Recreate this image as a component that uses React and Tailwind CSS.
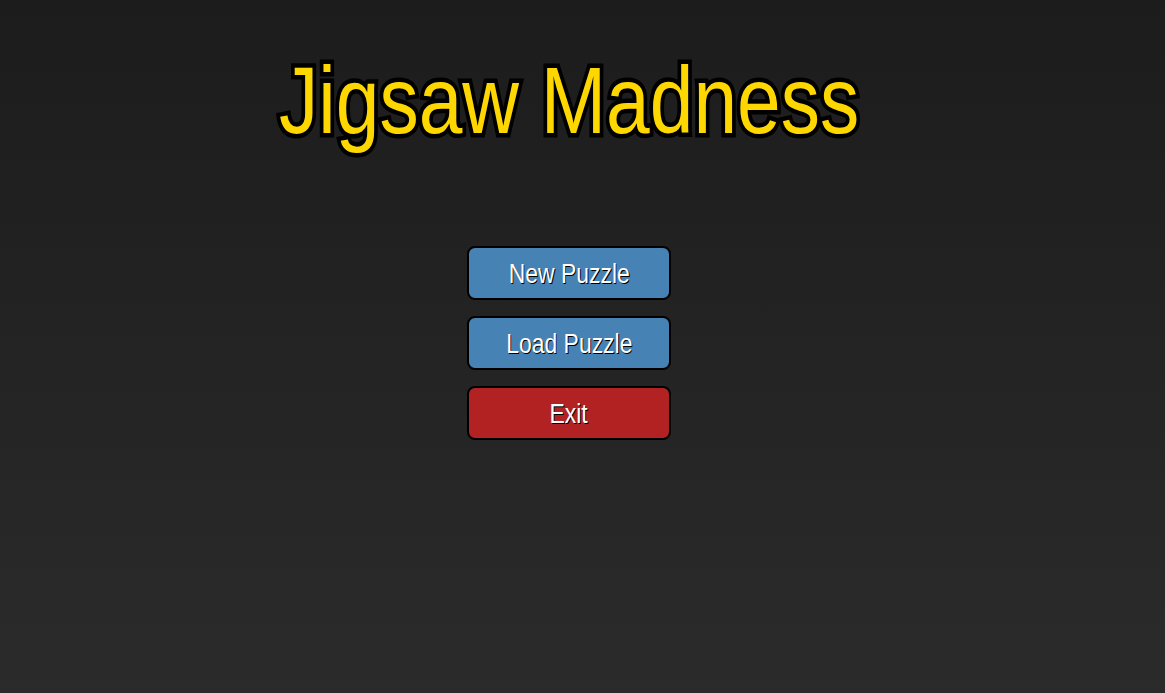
import React from "react";

const menuButtons = [
    { label: "New Puzzle", color: "bg-[#4682b4]" },
    { label: "Load Puzzle", color: "bg-[#4682b4]" },
    { label: "Exit", color: "bg-[#b22222]" },
];

const App = () => {
    return (
        <div className="w-full h-[693px] bg-gradient-to-b from-[#1c1c1c] to-[#2b2b2b] overflow-hidden font-['Liberation_Sans_Narrow','Liberation_Sans',Arial,sans-serif]">
            <div className="flex flex-col items-center pt-[53px] pr-[27px]">
                {/* no narrow font installed, so squeeze the regular one */}
                <h1 className="text-[95px] leading-none text-[#ffd700] scale-x-[0.826] [-webkit-text-stroke:9px_#000] [paint-order:stroke_fill]">
                    Jigsaw Madness
                </h1>
                <div className="flex flex-col gap-4 mt-[98px]">
                    {menuButtons.map((item, index) => (
                        <button
                            key={index}
                            className={`${item.color} w-[204px] h-[54px] border-2 border-black rounded-lg flex items-center justify-center pt-[3px]`}
                        >
                            <span className="text-white text-[27px] leading-none scale-x-[0.85] [text-shadow:1px_1px_0_#000]">
                                {item.label}
                            </span>
                        </button>
                    ))}
                </div>
            </div>
        </div>
    );
};

export default App;
